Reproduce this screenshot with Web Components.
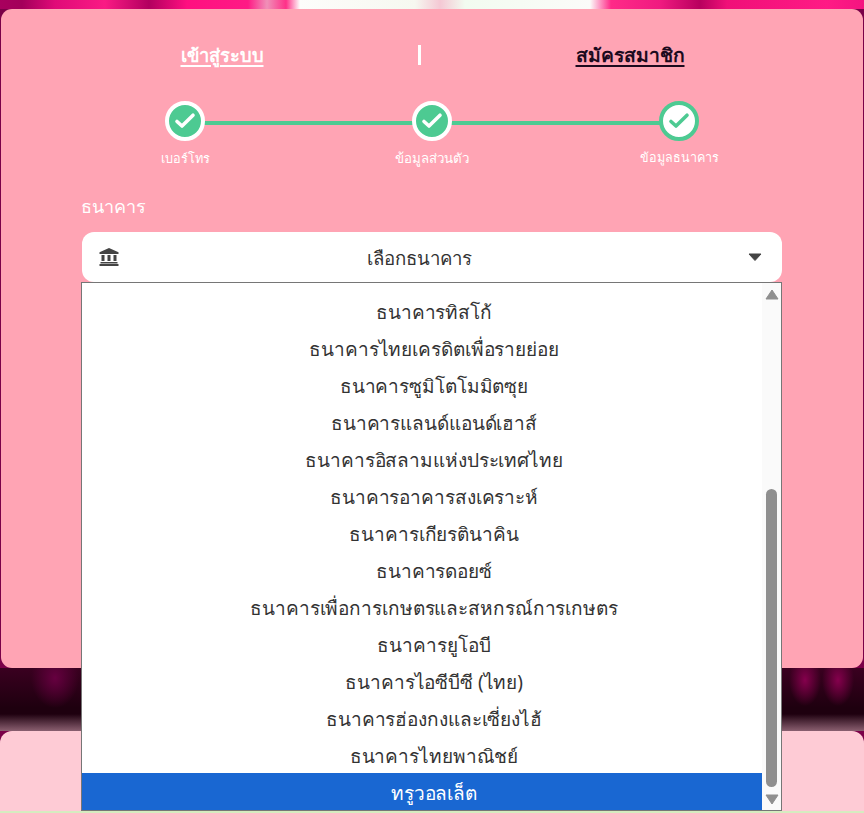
<!DOCTYPE html>
<html lang="th"><head><meta charset="utf-8">
<style>
html,body{margin:0;padding:0;height:100%}
body{font-family:"Noto Sans","Noto Sans CJK SC",sans-serif;overflow:hidden}
</style></head><body>
<app-stage>
  <tab-switch></tab-switch>
  <step-bar></step-bar>
  <bank-field label="ธนาคาร" placeholder="เลือกธนาคาร" selected="ทรูวอลเล็ต" options="ธนาคารทิสโก้|ธนาคารไทยเครดิตเพื่อรายย่อย|ธนาคารซูมิโตโมมิตซุย|ธนาคารแลนด์แอนด์เฮาส์|ธนาคารอิสลามแห่งประเทศไทย|ธนาคารอาคารสงเคราะห์|ธนาคารเกียรตินาคิน|ธนาคารดอยซ์|ธนาคารเพื่อการเกษตรและสหกรณ์การเกษตร|ธนาคารยูโอบี|ธนาคารไอซีบีซี (ไทย)|ธนาคารฮ่องกงและเซี่ยงไฮ้|ธนาคารไทยพาณิชย์|ทรูวอลเล็ต"></bank-field>
</app-stage>
<script>
const FONT='"Noto Sans","Noto Sans CJK SC",sans-serif';
class AppStage extends HTMLElement{constructor(){super();this.attachShadow({mode:'open'}).innerHTML=`<style>
:host{display:flex;flex-direction:column;width:864px;height:813px;overflow:hidden;background:#7a0048}
.top{height:9px;flex:none;background:
 linear-gradient(90deg,#a8005e 0,#a3005a 22px,#e00a78 55px,#fa1a84 105px,#b2005f 149px,#ff0f80 187px,#ff1a85 248px,#f090b8 267px,#ff3088 286px,#fdfdfb 300px,#f6f8f0 415px,#f4c8d4 440px,#f2fbf0 465px,#fbfbf9 590px,#ff2a88 611px,#f01a80 660px,#b8005e 700px,#f01078 727px,#ff1a85 827px,#f41480 864px)}
.card{flex:none;height:659px;margin:0 1px;background:#ffa4b4;border-radius:11px;box-sizing:border-box;padding-top:30px}
.gap{flex:none;height:63px;background:
 radial-gradient(ellipse 24px 30px at 55px 10px,#660040 0,rgba(102,0,64,0) 100%),
 radial-gradient(ellipse 16px 26px at 165px 10px,#4a0028 0,rgba(74,0,40,0) 100%),
 radial-gradient(ellipse 16px 26px at 805px 12px,#85004d 0,rgba(133,0,77,0) 100%),
 radial-gradient(ellipse 16px 26px at 838px 12px,#85004d 0,rgba(133,0,77,0) 100%),
 linear-gradient(180deg,rgba(138,95,112,0) 46px,#8a5f70 63px),
 linear-gradient(180deg,#3a0020 0,#1e000f 40px,#1e000f 100%)}
.low{flex:1;background:#fecbd5;border-radius:12px 12px 0 0;border-bottom:2px solid #d6ecc0}
</style><div class="top"></div><div class="card"><slot></slot></div><div class="gap"></div><div class="low"></div>`}}
class TabSwitch extends HTMLElement{constructor(){super();this.attachShadow({mode:'open'}).innerHTML=`<style>
:host{display:grid;grid-template-columns:392px 3px 418px;padding-left:25px;height:32px;align-items:center;font:700 19px/32px ${FONT}}
a{justify-self:center;text-decoration:underline;text-decoration-thickness:2px;text-underline-offset:3px;cursor:pointer}
.a{color:#fff;font-size:18.3px}.b{color:#1c0a1e;font-size:19.3px}
i{display:block;height:20px;background:#fff;width:2.5px}
</style><a class="a">เข้าสู่ระบบ</a><i></i><a class="b">สมัครสมาชิก</a>`}}
const ck=(c)=>`<svg width="24" height="24" viewBox="0 0 24 24" fill="none"><path d="M4 12.5 9 17 20 6.2" stroke="${c}" stroke-width="3.6" stroke-linecap="round" stroke-linejoin="round"/></svg>`;
class StepBar extends HTMLElement{constructor(){super();this.attachShadow({mode:'open'}).innerHTML=`<style>
:host{display:block;margin:30px 0 0 0;height:96px}
.row{display:flex;justify-content:space-between;width:614px;margin-left:124px;background:linear-gradient(#4dca92,#4dca92) no-repeat 60px 20px/494px 4px}
.s{display:flex;flex-direction:column;align-items:center;width:120px;color:#fff;font:500 13px/20px ${FONT}}
.dot{width:40px;height:40px;border-radius:50%;box-sizing:border-box;display:flex;align-items:center;justify-content:center;margin-bottom:7px}
.d{background:#4dca92;border:4px solid #fff}.w{background:#fff;border:4px solid #4dca92}
</style><div class="row">
<div class="s" style="font-size:12.7px"><div class="dot d">${ck('#fff')}</div>เบอร์โทร</div>
<div class="s" style="font-size:13.3px"><div class="dot d">${ck('#fff')}</div>ข้อมูลส่วนตัว</div>
<div class="s" style="font-size:12.6px"><div class="dot w">${ck('#4dca92')}</div>ข้อมูลธนาคาร</div></div>`}}
class BankField extends HTMLElement{constructor(){super();const o=this.getAttribute('options').split('|'),sel=this.getAttribute('selected');
this.attachShadow({mode:'open'}).innerHTML=`<style>
:host{display:block;margin:0 81px 0 80px;position:relative;color:#333}
label{display:block;color:#fff;font:500 18px/26px ${FONT};margin-bottom:12px;margin-top:-4px;padding-bottom:1px}
.sel{height:50px;margin-left:1px;background:#fff;border-radius:12px;display:flex;align-items:center;padding:0 20px 0 17px;box-sizing:border-box;font:400 18.6px/26px ${FONT};color:#333}
.sel span{flex:1;text-align:center;padding-top:2px;padding-right:28px}
.list{position:absolute;left:0;right:0;top:89px;height:527px;border:1px solid #767676;background:#fff;display:flex;font:400 19px/37px ${FONT};letter-spacing:-.1px;color:#333;overflow:hidden}
ul{list-style:none;margin:0;padding:9px 0 0;flex:1}
li{height:37px;box-sizing:border-box;padding:2px 0 0 24px;text-align:center;white-space:nowrap}
li.on{background:#1967d2;color:#fff}
.sb{width:19px;background:#fafafa;position:relative}
.th{position:absolute;left:4px;width:11px;top:206px;height:298px;background:#8f8f8f;border-radius:5.5px}
.up,.dn{position:absolute;left:3px}.up{top:6px}.dn{bottom:5px}
</style><label>${this.getAttribute('label')}</label>
<div class="sel"><svg width="20" height="18" viewBox="0 0 20 18"><path fill="#444" d="M10 0 19.5 4.2V6H.5V4.2ZM2.5 7H5.5V13H2.5ZM8.5 7H11.5V13H8.5ZM14.5 7H17.5V13H14.5ZM1.5 14H18.5V15.5H1.5ZM.5 16H19.5V18H.5Z"/></svg>
<span>${this.getAttribute('placeholder')}</span>
<svg width="14" height="8" viewBox="0 0 14 8"><path fill="#444" d="M1 1H13L7 7.5Z" stroke="#444" stroke-linejoin="round"/></svg></div>
<div class="list"><ul>${o.map(t=>`<li class="${t===sel?'on':''}">${t}</li>`).join('')}</ul>
<div class="sb"><svg class="up" width="14" height="11" viewBox="0 0 14 11"><path fill="#8f8f8f" stroke="#8f8f8f" stroke-linejoin="round" d="M7 1 13 10H1Z"/></svg><div class="th"></div><svg class="dn" width="14" height="11" viewBox="0 0 14 11"><path fill="#8f8f8f" stroke="#8f8f8f" stroke-linejoin="round" d="M7 10 13 1H1Z"/></svg></div></div>`}}
customElements.define('app-stage',AppStage);customElements.define('tab-switch',TabSwitch);customElements.define('step-bar',StepBar);customElements.define('bank-field',BankField);
</script></body></html>
